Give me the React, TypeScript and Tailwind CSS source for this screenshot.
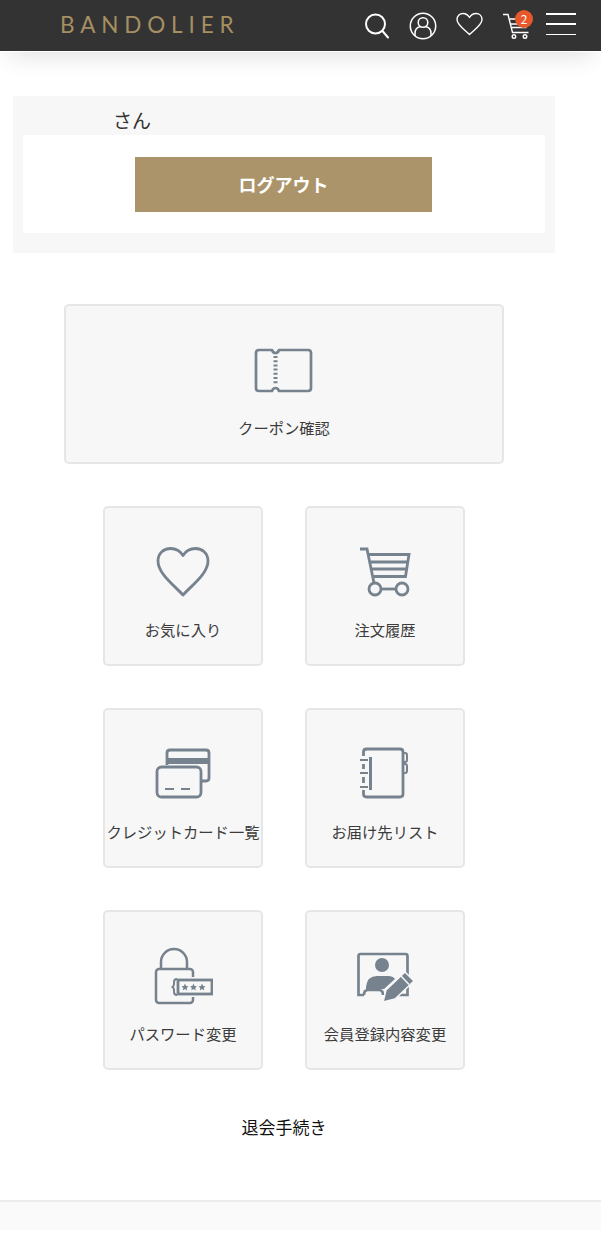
import React from "react";

const gray = "#76838e";

const CouponIcon = () => (
  <svg width="60" height="60" viewBox="0 0 60 60" fill="none" stroke={gray} strokeWidth="2.700" strokeLinejoin="round">
    <path d="M5 11h13q1 3 3.500 3t3.500-3h29q3 0 3 3v35q0 3-3 3H25q-1-3-3.500-3T18 52H5q-3 0-3-3V14q0-3 3-3z" />
    <path d="M21.500 17v29" strokeWidth="4" strokeDasharray="2 2.200" />
  </svg>
);

const HeartIcon = () => (
  <svg width="60" height="60" viewBox="0 0 60 60" fill="none" stroke={gray} strokeWidth="2.800" strokeLinejoin="round">
    <path d="M30 54 C22 45 5 33 5 20 C5 12 11 7.500 17.500 7.500 C23 7.500 27.500 10.500 30 14.500 C32.500 10.500 37 7.500 42.500 7.500 C49 7.500 55 12 55 20 C55 33 38 45 30 54z" />
  </svg>
);

const CartIcon = () => (
  <svg width="60" height="60" viewBox="0 0 60 60" fill="none" stroke={gray} strokeWidth="2.800">
    <path d="M5 8h7l7 34" />
    <path d="M14 13.500h40l-3.500 22H18.500" />
    <path d="M15.500 21h37M17 28h34.500" />
    <circle cx="20" cy="48" r="6" />
    <circle cx="47" cy="48" r="6" />
    <path d="M26 48h15" />
  </svg>
);

const CardIcon = () => (
  <svg width="60" height="60" viewBox="0 0 60 60" fill="none" stroke={gray} strokeWidth="2.800">
    <path d="M14 22v-12q0-3 3-3h36q3 0 3 3v25q0 3-3 3h-4" />
    <path d="M14 18h42" strokeWidth="6" />
    <rect x="4" y="24" width="44" height="30" rx="4.500" fill="#f7f7f7" />
    <path d="M12 46h9M28 46h9" strokeWidth="1.800" />
  </svg>
);

const BookIcon = () => (
  <svg width="60" height="60" viewBox="0 0 60 60" fill="none" stroke={gray} strokeWidth="2.800">
    <path d="M8.500 13V9q0-3 3-3H45q3 0 3 3v42q0 3-3 3H11.500q-3 0-3-3v-4" />
    <path d="M8.500 21v5M8.500 34v6" />
    <path d="M5 17h8M5 30h8M5 44h8" strokeWidth="2.200" />
    <path d="M15.500 14v33" strokeWidth="3" />
    <path d="M48 10h2q2 0 2 2v5q0 2-2 2h-2M48 21h2q2 0 2 2v5q0 2-2 2h-2" strokeWidth="2" />
  </svg>
);

const LockIcon = () => (
  <svg width="60" height="60" viewBox="0 0 60 60" fill="none" stroke={gray} strokeWidth="2.500">
    <path d="M8 24v-7a13 13 0 0 1 26 0v7" />
    <rect x="3" y="24" width="37" height="34" rx="3" />
    <rect x="20" y="32" width="22" height="20" fill="#f7f7f7" stroke="none" />
    <path d="M24 34q-3 0-3 3v2q0 2-1.500 3 1.500 1 1.500 3v2q0 3 3 3" strokeWidth="2" />
    <rect x="25" y="35" width="34" height="14" fill="#f7f7f7" strokeWidth="2.800" />
    <g fill={gray} stroke="none">
      <path d="M32 38.500l1.100 2.400 2.400.3-1.800 1.700.5 2.500-2.200-1.300-2.200 1.300.5-2.500-1.800-1.700 2.400-.3z" />
      <path d="M40.500 38.500l1.100 2.400 2.400.3-1.800 1.700.5 2.500-2.200-1.300-2.200 1.300.5-2.500-1.800-1.700 2.400-.3z" />
      <path d="M49 38.500l1.100 2.400 2.400.3-1.800 1.700.5 2.500-2.200-1.300-2.200 1.300.5-2.500-1.800-1.700 2.400-.3z" />
    </g>
  </svg>
);

const ProfileIcon = () => (
  <svg width="60" height="60" viewBox="0 0 60 60" fill="none" stroke={gray} strokeWidth="2.700">
    <path d="M9 50H3.500V11q0-2 2-2h45q2 0 2 2v20M52.500 42v8H44M9 50q0-5 4-5h11q4 0 4 5" />
    <circle cx="27" cy="20" r="7" fill={gray} stroke="none" />
    <path d="M11 42q1-11 11-11h11q5 0 7 3L29 44H11z" fill={gray} stroke="none" />
    <path d="M28 57l3-12 19-18 9 9-19 18z" fill={gray} stroke="#f7f7f7" strokeWidth="1.500" />
    <path d="M46 31l8 8.500" stroke="#f7f7f7" strokeWidth="1.500" />
  </svg>
);

const MenuCard = ({ label, icon, wide }: { label: string; icon: React.ReactNode; wide?: boolean }) => (
  <a
    className={`flex h-[160px] flex-col items-center rounded-[5px] border-2 border-[#e6e6e6] bg-[#f7f7f7] pt-[33px] ${
      wide ? "w-[440px]" : "w-[160px]"
    }`}
  >
    {icon}
    <span className="mt-[18px] whitespace-nowrap text-[15.300px] leading-5 text-[#3c3c3c]">{label}</span>
  </a>
);

export default function App() {
  return (
    <div
      className="flex min-h-[1251px] flex-col bg-white"
      style={{ fontFamily: '"Noto Sans CJK JP", "Noto Sans", sans-serif' }}
    >
      <header className="flex h-[52px] items-center border-b border-white bg-[#333] pl-[60px] pr-[25px] shadow-[0_12px_24px_-8px_rgba(0,0,0,0.12)]">
        <span className="font-['Lato'] text-[22.500px] leading-none tracking-[0.26em] text-[#a68f62]">BANDOLIER</span>
        <div className="ml-auto flex items-center">
          <svg width="25" height="26" viewBox="0 0 25 26" fill="none" stroke="white" strokeWidth="2">
            <circle cx="11.500" cy="11" r="9.500" />
            <path d="M18.500 18l5.500 6.500" strokeLinecap="round" />
          </svg>
          <svg className="ml-5" width="28" height="28" viewBox="0 0 28 28" fill="none" stroke="white" strokeWidth="1.500">
            <circle cx="14" cy="14" r="12.700" />
            <circle cx="14" cy="10.500" r="4.800" />
            <path d="M6 24v-2.500q0-6 5.500-7M22 24v-2.500q0-6-5.500-7" />
          </svg>
          <svg className="ml-[19px] mb-[3px]" width="27" height="24" viewBox="0 0 27 24" fill="none" stroke="white" strokeWidth="1.400" strokeLinejoin="round">
            <path d="M13.500 22.500C9 18 1 13 1 7.500 1 4 3.500 1.500 7 1.500c3 0 5 1.500 6.500 4 1.500-2.500 3.500-4 6.500-4 3.500 0 6 2.500 6 6 0 5.500-8 10.500-12.500 15z" />
          </svg>
          <div className="relative ml-5 h-[28px] w-[28px]">
            <svg width="28" height="28" viewBox="0 0 28 28" fill="none" stroke="white" strokeWidth="1.400">
              <path d="M0 2.500h5l4.500 18h16" />
              <path d="M6.500 7h20l-2 5H8M8.500 15.500h15" />
              <circle cx="11" cy="24.500" r="1.800" />
              <circle cx="22" cy="24.500" r="1.800" />
            </svg>
            <span className="absolute left-[12px] top-[-2px] flex h-[18px] w-[18px] items-center justify-center rounded-full bg-[#e8582b] text-[12px] leading-none text-white">
              2
            </span>
          </div>
          <div className="mb-[3px] ml-[15px] flex h-[22px] w-[30px] flex-col justify-between">
            <div className="h-[1.500px] bg-white" />
            <div className="h-[1.500px] bg-white" />
            <div className="h-[1.500px] bg-white" />
          </div>
        </div>
      </header>

      <main className="flex w-[568px] flex-col items-center pt-[44px]">
        <section className="h-[157px] w-[542px] bg-[#f7f7f7] px-[10px]">
          <p className="h-[39px] pl-[90px] pt-[10px] text-[19px] leading-[28px] text-[#333]">さん</p>
          <div className="flex h-[98px] bg-white pl-[112px] pt-[22px]">
            <button className="h-[55px] w-[297px] bg-[#ab9469] text-[18px] font-bold text-white">ログアウト</button>
          </div>
        </section>

        <div className="mt-[51px]">
          <MenuCard wide label="クーポン確認" icon={<CouponIcon />} />
        </div>

        <div className="mt-[42px] grid grid-cols-[160px_160px] gap-x-[42px] gap-y-[42px]">
          <MenuCard label="お気に入り" icon={<HeartIcon />} />
          <MenuCard label="注文履歴" icon={<CartIcon />} />
          <MenuCard label="クレジットカード一覧" icon={<CardIcon />} />
          <MenuCard label="お届け先リスト" icon={<BookIcon />} />
          <MenuCard label="パスワード変更" icon={<LockIcon />} />
          <MenuCard label="会員登録内容変更" icon={<ProfileIcon />} />
        </div>

        <a className="mt-[44px] text-[17px] leading-[26px] text-[#111]">退会手続き</a>
      </main>

      <footer className="mt-[60px] h-[30px] border-t-2 border-[#ececec] bg-[#fafafa]" />
    </div>
  );
}
